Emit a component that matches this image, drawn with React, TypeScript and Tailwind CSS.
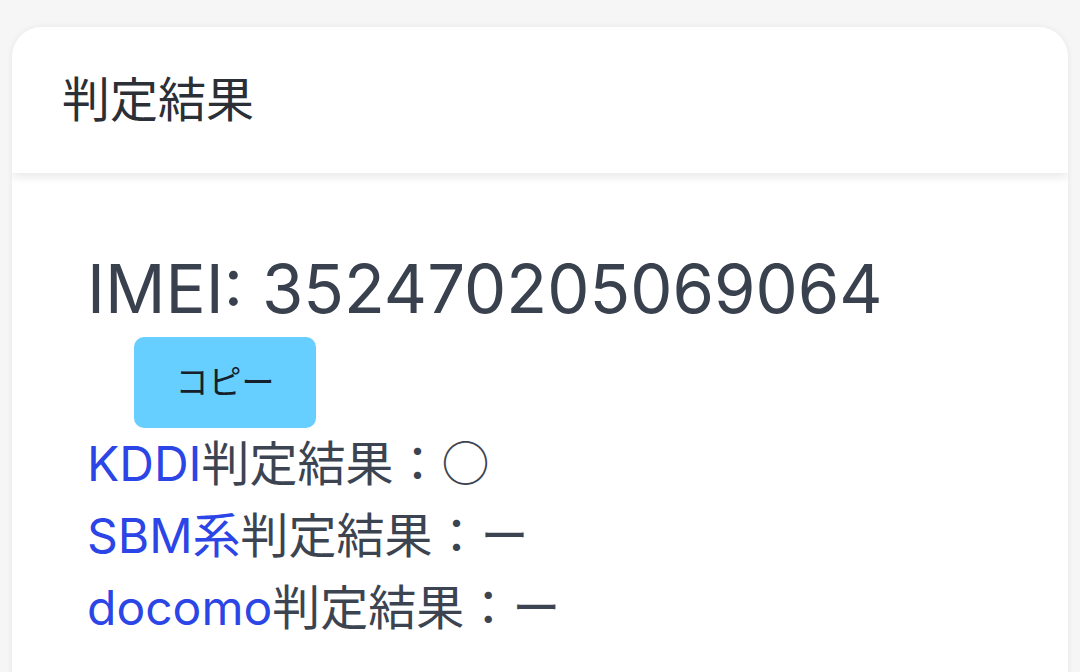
import React from "react";

const results = [
  { carrier: "KDDI", mark: "○" },
  { carrier: "SBM系", mark: "ー" },
  { carrier: "docomo", mark: "ー" },
];

export default function App() {
  return (
    <div
      className="min-h-screen bg-[#f6f6f7] px-[12px] pt-[27px] text-[#374151]"
      style={{ fontFamily: 'Inter, "Noto Sans CJK JP", sans-serif' }}
    >
      <div className="h-[660px] rounded-t-[30px] bg-white shadow-[0_0_6px_rgba(0,0,0,0.07)] overflow-hidden">
        {/* card header */}
        <div className="relative z-10 flex h-[146px] items-center pl-[50px] bg-white shadow-[0_5px_8px_rgba(0,0,0,0.08)]">
          <h2 className="text-[48px] leading-none text-[#2b2f36]">判定結果</h2>
        </div>

        {/* card body */}
        <div className="pl-[75px] pt-[76px]">
          <p className="text-[67px] leading-[80px] text-[#3a414e]">IMEI: 352470205069064</p>
          <button className="ml-[47px] mt-[8px] flex h-[91px] w-[182px] items-center justify-center rounded-[10px] bg-[#66cfff] text-[33px] text-[#15202b]">
            コピー
          </button>
          <div className="mt-[0px] text-[48px] leading-[72px] text-[#3d4451]">
            {results.map((r) => (
              <p key={r.carrier} className="h-[72px] whitespace-nowrap">
                <span className="text-[#2b45e6]">{r.carrier}</span>
                <span className="font-['Noto_Sans_CJK_JP'] leading-[60px]">
                  判定結果：{r.mark}
                </span>
              </p>
            ))}
          </div>
        </div>
      </div>
    </div>
  );
}
